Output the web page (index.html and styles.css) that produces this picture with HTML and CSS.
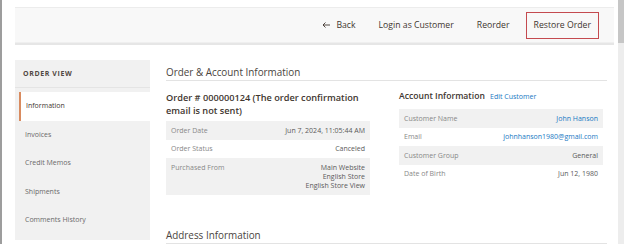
FILE: index.html
```html
<!DOCTYPE html>
<html lang="en">
<head>
    <meta charset="UTF-8">
    <meta name="viewport" content="width=device-width, initial-scale=1.0">
    <title>Order # 000000124</title>
    <link rel="stylesheet" href="styles.css">
</head>
<body>
    <div class="edge"></div>
    <div class="page">
        <div class="page-actions">
            <a class="action back" href="#">
                <svg width="8" height="6" viewBox="0 0 8 6"><path d="M8 3H1M3.5 0.5L1 3l2.5 2.5" fill="none" stroke="#41362f" stroke-width="0.9"/></svg>
                Back
            </a>
            <a class="action" href="#">Login as Customer</a>
            <a class="action" href="#">Reorder</a>
            <a class="action primary" href="#">Restore Order</a>
        </div>

        <div class="layout">
            <aside class="nav">
                <div class="nav-title">Order View</div>
                <ul class="nav-items">
                    <li class="active">Information</li>
                    <li>Invoices</li>
                    <li>Credit Memos</li>
                    <li>Shipments</li>
                    <li>Comments History</li>
                </ul>
            </aside>

            <main class="content">
                <h2 class="section-title">Order &amp; Account Information</h2>
                <div class="columns">
                    <div class="col">
                        <h3 class="order-title">Order # 000000124 (The order confirmation email is not sent)</h3>
                        <table class="info">
                            <tr><td>Order Date</td><td>Jun 7, 2024, 11:05:44 AM</td></tr>
                            <tr><td>Order Status</td><td>Canceled</td></tr>
                            <tr><td>Purchased From</td><td>Main Website<br>English Store<br>English Store View</td></tr>
                        </table>
                    </div>
                    <div class="col">
                        <h3 class="account-title">Account Information <a href="#">Edit Customer</a></h3>
                        <table class="info">
                            <tr><td>Customer Name</td><td><a href="#">John Hanson</a></td></tr>
                            <tr><td>Email</td><td><a href="#">johnhanson1980@gmail.com</a></td></tr>
                            <tr><td>Customer Group</td><td>General</td></tr>
                            <tr><td>Date of Birth</td><td>Jun 12, 1980</td></tr>
                        </table>
                    </div>
                </div>
                <h2 class="section-title address">Address Information</h2>
            </main>
        </div>
    </div>
    <div class="scrollbar"><div class="thumb"></div></div>
</body>
</html>
```

FILE: styles.css
```css
html, body {
    margin: 0;
    height: 244px;
    overflow: hidden;
}
body {
    display: flex;
    font-family: 'Open Sans', sans-serif;
    color: #41362f;
    background: #fff;
}
a {
    text-decoration: none;
}
.edge {
    width: 2px;
    background: #9d9d9d;
}
.page {
    flex: 1;
    padding: 7px 4px 0 13px;
}

/* top bar with the actions */
.page-actions {
    height: 34px;
    display: flex;
    justify-content: flex-end;
    align-items: center;
    gap: 9px;
    padding-right: 15px;
    background: #f8f8f8;
    border-top: 1px solid #ececec;
    border-bottom: 1px solid #efefef;
    box-shadow: 0 2px 0 #e6e6e6;
}
.action {
    display: flex;
    align-items: center;
    gap: 6px;
    height: 27px;
    box-sizing: border-box;
    padding: 0 7px;
    font-size: 8.7px;
    color: #41362f;
}
.action.primary {
    border: 1px solid #c44a4f;
    padding: 0 7px;
}

.layout {
    display: flex;
    gap: 16px;
    margin-top: 17px;
}

/* left tabs */
.nav {
    width: 135px;
    height: 180px;
    background: #f1f1f1;
}
.nav-title {
    height: 27px;
    line-height: 27px;
    padding-left: 8px;
    font-size: 7px;
    font-weight: 700;
    letter-spacing: 0.6px;
    text-transform: uppercase;
    color: #514943;
    border-bottom: 1px solid #e4e4e4;
}
.nav-items {
    list-style: none;
    margin: 4px 0 0;
    padding: 0;
}
.nav-items li {
    height: 28.5px;
    line-height: 28.5px;
    padding-left: 10px;
    font-size: 7px;
    color: #6a6a6a;
}
.nav-items li.active {
    margin-left: 4px;
    padding-left: 5px;
    background: #fff;
    border-left: 2px solid #d98b5f;
    color: #41362f;
}

/* main */
.content {
    width: 441px;
}
.section-title {
    margin: 0;
    padding: 5px 0 1px;
    font-size: 9.9px;
    line-height: 14px;
    font-weight: 400;
    color: #4a4440;
    border-bottom: 1px solid #e3e3e3;
}
.section-title.address {
    margin-top: 28px;
}
.columns {
    display: grid;
    grid-template-columns: 204px 204px;
    gap: 29px;
}
.order-title,
.account-title {
    line-height: 13px;
    font-weight: 600;
}
.order-title {
    font-size: 9.2px;
    margin: 10px 0 4px;
}
.account-title {
    font-size: 8.6px;
    margin: 9px 0 6px;
}
.account-title a {
    margin-left: 3px;
    font-size: 7px;
    font-weight: 400;
    color: #1979c3;
}
.info {
    width: 100%;
    border-collapse: collapse;
    font-size: 7px;
    line-height: 9px;
}
.info tr:nth-child(odd) {
    background: #f1f1f1;
}
.info td {
    padding: 4.75px 5px;
    vertical-align: top;
    color: #888;
}
.info td:last-child {
    text-align: right;
    color: #5a5a5a;
}
.info a {
    color: #1979c3;
}

.scrollbar {
    width: 6px;
    background: #ededed;
}
.scrollbar .thumb {
    height: 43px;
    background: #c6c6c6;
}
```
